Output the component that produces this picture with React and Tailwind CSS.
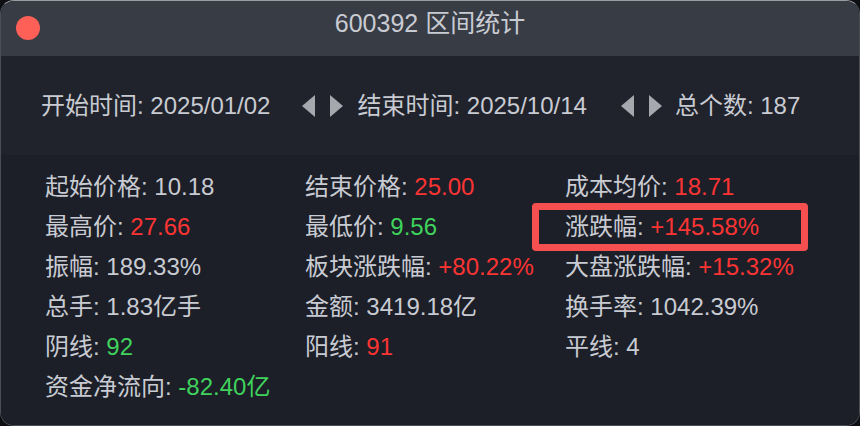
import React from "react";

const font = { fontFamily: '"Liberation Sans", "Noto Sans CJK SC", sans-serif' };

const Tri = ({ dir }) => (
  <svg width="14" height="22" viewBox="0 0 14 22" className="shrink-0">
    {dir === "left" ? (
      <polygon points="13,0 13,22 0,11" fill="#a5a8ad" />
    ) : (
      <polygon points="1,0 1,22 14,11" fill="#a5a8ad" />
    )}
  </svg>
);

const stats = [
  ["起始价格", "10.18", ""],
  ["结束价格", "25.00", "up"],
  ["成本均价", "18.71", "up"],
  ["最高价", "27.66", "up"],
  ["最低价", "9.56", "down"],
  ["涨跌幅", "+145.58%", "up", true],
  ["振幅", "189.33%", ""],
  ["板块涨跌幅", "+80.22%", "up"],
  ["大盘涨跌幅", "+15.32%", "up"],
  ["总手", "1.83亿手", ""],
  ["金额", "3419.18亿", ""],
  ["换手率", "1042.39%", ""],
  ["阴线", "92", "down"],
  ["阳线", "91", "up"],
  ["平线", "4", ""],
  ["资金净流向", "-82.40亿", "down"],
];

const tone = {
  up: "text-[#fb3434]",
  down: "text-[#3fd25c]",
  "": "text-[#c9cbd3]",
};

export default function App() {
  return (
    <div className="w-[860px] h-[426px] bg-[#0e0f12]" style={font}>
      <div className="w-full h-full rounded-[14px] overflow-hidden border border-[#4a4d55] border-t-[#9a9ca2] flex flex-col">
        {/* title bar */}
        <div className="relative h-[55px] shrink-0 bg-[#373c45] flex items-center justify-center">
          <span className="absolute left-[15px] top-[15px] w-6 h-6 rounded-full bg-[#fe5f57]" />
          <span className="text-[25px] text-[#c9cbd2] -mt-[10px]">600392 区间统计</span>
        </div>

        {/* date range */}
        <div className="h-[99px] shrink-0 bg-[#20232b] pt-[30px]">
          <div className="flex items-center h-10 pl-[40px] text-[24px] text-[#c9cbd3] whitespace-nowrap">
            <span>开始时间: 2025/01/02</span>
            <div className="flex items-center gap-[13px] ml-[32px]">
              <Tri dir="left" />
              <Tri dir="right" />
            </div>
            <span className="ml-[14px]">结束时间: 2025/10/14</span>
            <div className="flex items-center gap-[13px] ml-[34px]">
              <Tri dir="left" />
              <Tri dir="right" />
            </div>
            <span className="ml-[13px]">总个数: 187</span>
          </div>
        </div>

        {/* stats */}
        <div className="flex-1 bg-[#1c1f27] pt-[12px] pl-[44px]">
          <div className="grid grid-cols-[260px_260px_260px] auto-rows-[40px] text-[24px] text-[#c9cbd3] whitespace-nowrap">
            {stats.map(([label, value, t, boxed]) => (
              <div key={label} className="relative flex items-center">
                {boxed && (
                  <span className="absolute left-[-33px] top-[-4px] w-[276px] h-[48px] border-[7px] border-[#f5504f] rounded-[4px]" />
                )}
                <span className="whitespace-pre">{label}: </span>
                <span className={tone[t]}>{value}</span>
              </div>
            ))}
          </div>
        </div>
      </div>
    </div>
  );
}
